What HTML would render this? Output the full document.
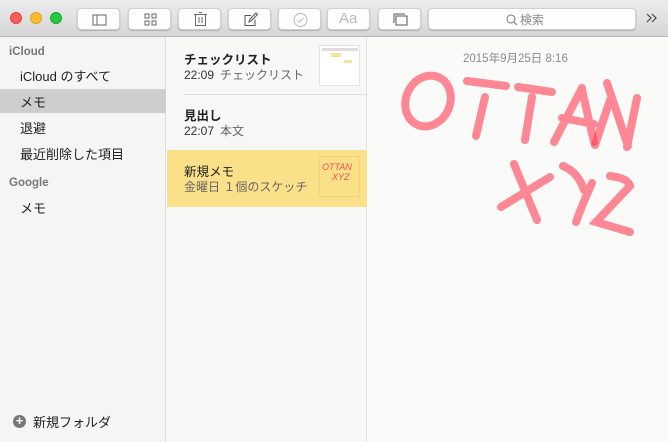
<!DOCTYPE html>
<html><head><meta charset="utf-8"><style>
*{margin:0;padding:0;box-sizing:border-box}
body{width:668px;height:442px;overflow:hidden;font-family:"Liberation Sans","Noto Sans CJK JP",sans-serif;background:#fafaf8;position:relative}
.tb{position:absolute;left:0;top:0;width:668px;height:37px;background:linear-gradient(#ececec,#d6d6d6);border-bottom:1px solid #b8b8b8}
.dot{position:absolute;top:12px;width:12px;height:12px;border-radius:50%}
.btn{position:absolute;top:8px;height:22px;width:32px;background:#fdfdfd;border-radius:4px;box-shadow:0 0.5px 1px rgba(0,0,0,.35);border:1px solid #d0d0d0}
.btn svg{position:absolute;left:0;top:0}
.side{position:absolute;left:0;top:37px;width:166px;height:405px;background:#f5f5f5;border-right:1px solid #dcdcdc;font-size:13px;color:#222}
.side div{position:absolute;white-space:nowrap}
.hd{color:#777;font-size:11.5px;font-weight:bold}
.list{position:absolute;left:167px;top:37px;width:200px;height:405px;background:#f7f7f5;border-right:1px solid #e2e2e0}
.t{position:absolute;left:17px;font-size:12.5px;font-weight:bold;color:#222;white-space:nowrap}
.s{position:absolute;left:17px;font-size:12px;color:#333;white-space:nowrap}
.s span{color:#666;margin-left:6px}
</style></head><body>
<div class="tb">
<div class="dot" style="left:10px;background:#fc5b57;border:0.5px solid #e0443e"></div>
<div class="dot" style="left:30px;background:#fdbd2f;border:0.5px solid #dea123"></div>
<div class="dot" style="left:50px;background:#27c73f;border:0.5px solid #1aab29"></div>
<div class="btn" style="left:77px;width:43px"><svg width="43" height="22"><rect x="15" y="6" width="13" height="10" fill="none" stroke="#666" stroke-width="1"/><line x1="19" y1="6" x2="19" y2="16" stroke="#666"/></svg></div>
<div class="btn" style="left:128px;width:43px"><svg width="43" height="22"><g fill="none" stroke="#666"><rect x="16" y="5" width="4" height="4"/><rect x="23" y="5" width="4" height="4"/><rect x="16" y="12" width="4" height="4"/><rect x="23" y="12" width="4" height="4"/></g></svg></div>
<div class="btn" style="left:178px;width:43px"><svg width="43" height="22"><g fill="none" stroke="#666"><line x1="15" y1="5.5" x2="28" y2="5.5"/><rect x="16.5" y="5.5" width="10" height="11"/><line x1="20" y1="3.5" x2="23" y2="3.5"/><line x1="20" y1="8" x2="20" y2="14"/><line x1="23" y1="8" x2="23" y2="14"/></g></svg></div>
<div class="btn" style="left:228px;width:43px"><svg width="43" height="22"><g fill="none" stroke="#555"><path d="M22 6.5H16v10h10v-6"/><path d="M20 13l1-3 6-6 1.5 1.5-6 6z"/></g></svg></div>
<div class="btn" style="left:278px;width:43px"><svg width="43" height="22"><circle cx="21.5" cy="11" r="6.5" fill="none" stroke="#bbb"/><path d="M18.5 11l2 2 4-4" fill="none" stroke="#bbb"/></svg></div>
<div class="btn" style="left:327px;width:43px"><div style="position:absolute;left:11px;top:1px;font-size:15px;color:#bbb">Aa</div></div>
<div class="btn" style="left:378px;width:43px"><svg width="43" height="22"><g fill="none" stroke="#555"><rect x="17" y="7" width="11" height="9"/><path d="M15 14V5h11"/></g></svg></div>
<div class="btn" style="left:428px;width:208px"><svg width="208" height="22"><circle cx="82" cy="10" r="4" fill="none" stroke="#777"/><line x1="85" y1="13" x2="88" y2="16" stroke="#777"/></svg><div style="position:absolute;left:91px;top:2px;font-size:12px;color:#888">検索</div></div>
<svg style="position:absolute;left:645px;top:13px" width="14" height="10"><path d="M2 1l4 4-4 4M7 1l4 4-4 4" fill="none" stroke="#444" stroke-width="1.2"/></svg>
</div>
<div class="side">
<div class="hd" style="left:9px;top:9px">iCloud</div>
<div style="left:20px;top:29px">iCloud のすべて</div>
<div style="left:0;top:52px;width:166px;height:24px;background:#cecece"></div>
<div style="left:20px;top:55px">メモ</div>
<div style="left:20px;top:81px">退避</div>
<div style="left:20px;top:107px">最近削除した項目</div>
<div class="hd" style="left:9px;top:140px">Google</div>
<div style="left:20px;top:161px">メモ</div>
<div style="left:13px;top:378px;width:13px;height:13px;border-radius:50%;background:#777;color:#fff;font-size:13px;line-height:12px;text-align:center;font-weight:bold">+</div>
<div style="left:33px;top:375px">新規フォルダ</div>
</div>
<div class="list">
<div class="t" style="top:12px">チェックリスト</div>
<div class="s" style="top:29px">22:09<span>チェックリスト</span></div>
<div style="position:absolute;left:152px;top:8px;width:41px;height:41px;border:1px solid #e4e4e4;background:#fff"><div style="position:absolute;left:2px;top:2px;width:36px;height:3px;background:#ddd"></div><div style="position:absolute;left:11px;top:7px;width:10px;height:4px;background:#f5e29a"></div><div style="position:absolute;left:24px;top:14px;width:8px;height:3px;background:#f5e29a"></div></div>
<div style="position:absolute;left:17px;top:57px;width:183px;height:1px;background:#dedede"></div>
<div class="t" style="top:68px">見出し</div>
<div class="s" style="top:85px">22:07<span>本文</span></div>
<div style="position:absolute;left:0;top:113px;width:200px;height:57px;background:#fbe08a"></div>
<div class="t" style="top:124px;font-weight:normal">新規メモ</div>
<div class="s" style="top:141px;color:#666">金曜日 １個のスケッチ</div>
<div style="position:absolute;left:152px;top:119px;width:41px;height:41px;border:1px solid #f0d37c;font-size:9px;color:#f05050;line-height:10px;padding:5px 0 0 2px;font-style:italic">OTTAN<br>&nbsp;&nbsp;&nbsp;&nbsp;XYZ</div>
</div>
<div style="position:absolute;left:463px;top:50px;font-size:11.5px;color:#8a8a8a">2015年9月25日 8:16</div>
<svg style="position:absolute;left:0;top:0" width="668" height="442"><g fill="none" stroke="#ff3a52" stroke-opacity="0.6" stroke-width="8" stroke-linecap="round">
<ellipse cx="428" cy="101" rx="22" ry="26" transform="rotate(25 428 101)"/>
<path d="M467 81L506 86M485 97L476 136"/>
<path d="M518 87L552 92M532 97L525 140"/>
<path d="M582 88L554 142M582 90L594 142M562 118L594 124"/>
<path d="M610 100L595 145M607 83L628 146M637 98L627 147"/>
<path d="M501 207L550 177M514 164L537 220"/>
<path d="M563 166Q578 172 584 190M592 183Q582 205 576 222"/>
<path d="M610 176Q628 178 630 186L596 222L630 232"/>
</g></svg>
</body></html>
